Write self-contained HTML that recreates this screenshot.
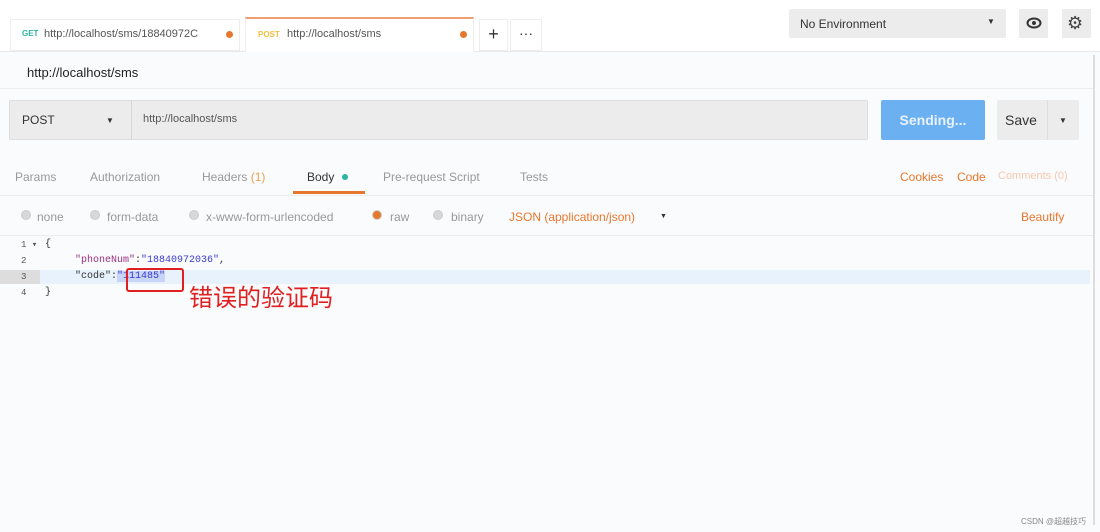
<!DOCTYPE html>
<html><head><meta charset="utf-8"><style>
*{margin:0;padding:0;box-sizing:border-box}
body{width:1100px;height:532px;background:#fafbfc;font-family:"Liberation Sans","Noto Sans CJK SC",sans-serif;position:relative;overflow:hidden;color:#333}
.a{position:absolute}
.t{font-size:12px;color:#555}
.g{color:#999;font-size:12px}
.dot{width:7px;height:7px;border-radius:50%;background:#e8772e}
.r{width:10px;height:10px;border-radius:50%;background:#d8d8d8;border:1px solid #ccc}
.m{font-family:'Liberation Mono',monospace;font-size:10px;white-space:pre}
</style></head><body>
<div class="a" style="left:0;top:0;width:1100px;height:52px;background:#fff;border-bottom:1px solid #e8e8e8"></div>
<div class="a" style="left:10px;top:19px;width:230px;height:32px;background:#fff;border:1px solid #eee"></div>
<div class="a" style="left:22px;top:29px;font-size:8px;font-weight:bold;color:#2bb5a0">GET</div>
<div class="a t" style="left:44px;top:28px;font-size:11px">http://localhost/sms/18840972C</div>
<div class="a dot" style="left:226px;top:31px"></div>
<div class="a" style="left:245px;top:17px;width:229px;height:35px;background:#fff;border-top:2px solid #f0a070;border-left:1px solid #eee;border-right:1px solid #eee"></div>
<div class="a" style="left:258px;top:30px;font-size:8px;font-weight:bold;color:#f5c040">POST</div>
<div class="a t" style="left:287px;top:28px;font-size:11px">http://localhost/sms</div>
<div class="a dot" style="left:460px;top:31px"></div>
<div class="a" style="left:479px;top:19px;width:29px;height:32px;background:#fff;border:1px solid #eee;text-align:center;font-size:18px;line-height:28px">+</div>
<div class="a" style="left:510px;top:19px;width:32px;height:32px;background:#fff;border:1px solid #eee;text-align:center;font-size:14px;line-height:26px">···</div>
<div class="a" style="left:789px;top:9px;width:217px;height:29px;background:#ececec;border-radius:2px"></div>
<div class="a t" style="left:800px;top:17px;font-size:12px;color:#333">No Environment</div>
<div class="a" style="left:987px;top:17px;font-size:8px">▼</div>
<div class="a" style="left:1019px;top:9px;width:29px;height:29px;background:#ececec"></div>
<svg class="a" style="left:1026px;top:17px" width="16" height="12"><ellipse cx="8" cy="6" rx="6.5" ry="4.5" fill="none" stroke="#333" stroke-width="2"/><circle cx="8" cy="6" r="2" fill="#333"/></svg>
<div class="a" style="left:1062px;top:9px;width:29px;height:29px;background:#ececec"></div>
<div class="a" style="left:1067px;top:11px;font-size:18px;line-height:24px;color:#444">⚙</div>
<div class="a" style="left:1093px;top:55px;width:2px;height:470px;background:#ddd"></div>
<div class="a" style="left:27px;top:65px;font-size:13px;color:#222">http://localhost/sms</div>
<div class="a" style="left:0;top:88px;width:1093px;height:1px;background:#ececec"></div>
<div class="a" style="left:9px;top:100px;width:859px;height:40px;background:#ececec;border:1px solid #ddd;border-radius:2px"></div>
<div class="a" style="left:131px;top:100px;width:1px;height:40px;background:#d8d8d8"></div>
<div class="a" style="left:22px;top:113px;font-size:12px;color:#333">POST</div>
<div class="a" style="left:106px;top:116px;font-size:8px">▼</div>
<div class="a t" style="left:143px;top:113px;font-size:11px">http://localhost/sms</div>
<div class="a" style="left:881px;top:100px;width:104px;height:40px;background:#6bb0f0;border-radius:2px;color:#e8f2ff;font-weight:bold;font-size:14px;text-align:center;line-height:40px">Sending...</div>
<div class="a" style="left:997px;top:100px;width:82px;height:40px;background:#ececec;border-radius:2px"></div>
<div class="a" style="left:1047px;top:100px;width:1px;height:40px;background:#ddd"></div>
<div class="a" style="left:1005px;top:112px;font-size:14px;color:#333">Save</div>
<div class="a" style="left:1059px;top:116px;font-size:8px">▼</div>
<div class="a g" style="left:15px;top:170px">Params</div>
<div class="a g" style="left:90px;top:170px">Authorization</div>
<div class="a g" style="left:202px;top:170px">Headers <span style="color:#e8a050">(1)</span></div>
<div class="a" style="left:307px;top:170px;font-size:12px;color:#333">Body</div>
<div class="a" style="left:342px;top:174px;width:6px;height:6px;border-radius:50%;background:#2bb5a0"></div>
<div class="a" style="left:293px;top:191px;width:72px;height:3px;background:#e8772e"></div>
<div class="a g" style="left:383px;top:170px">Pre-request Script</div>
<div class="a g" style="left:520px;top:170px">Tests</div>
<div class="a" style="left:900px;top:170px;font-size:12px;color:#e8772e">Cookies</div>
<div class="a" style="left:957px;top:170px;font-size:12px;color:#e8772e">Code</div>
<div class="a" style="left:998px;top:170px;font-size:11px;color:#f5c8b0">Comments (0)</div>
<div class="a" style="left:0;top:195px;width:1093px;height:1px;background:#ececec"></div>
<div class="a r" style="left:21px;top:210px"></div><div class="a g" style="left:37px;top:210px">none</div>
<div class="a r" style="left:90px;top:210px"></div><div class="a g" style="left:107px;top:210px">form-data</div>
<div class="a r" style="left:189px;top:210px"></div><div class="a g" style="left:206px;top:210px">x-www-form-urlencoded</div>
<div class="a r" style="left:372px;top:210px;background:#e8772e;border-color:#ccc"></div><div class="a g" style="left:390px;top:210px">raw</div>
<div class="a r" style="left:433px;top:210px"></div><div class="a g" style="left:451px;top:210px">binary</div>
<div class="a" style="left:509px;top:210px;font-size:12px;color:#e8772e">JSON (application/json)</div>
<div class="a" style="left:660px;top:213px;font-size:7px">▼</div>
<div class="a" style="left:1021px;top:210px;font-size:12px;color:#e8772e">Beautify</div>
<div class="a" style="left:0;top:235px;width:1093px;height:1px;background:#ececec"></div>
<div class="a" style="left:0;top:270px;width:40px;height:14px;background:#ddd"></div>
<div class="a" style="left:40px;top:270px;width:1050px;height:14px;background:#e8f2fc"></div>
<div class="a m" style="left:21px;top:240px;font-size:9px;color:#555">1 ▾</div>
<div class="a m" style="left:21px;top:256px;font-size:9px;color:#555">2</div>
<div class="a m" style="left:21px;top:272px;font-size:9px;color:#555">3</div>
<div class="a m" style="left:21px;top:288px;font-size:9px;color:#555">4</div>
<div class="a m" style="left:45px;top:239px">{</div>
<div class="a m" style="left:75px;top:255px"><span style="color:#a03080">"phoneNum"</span>:<span style="color:#3a3ad0">"18840972036"</span>,</div>
<div class="a m" style="left:75px;top:271px">"code":<span style="color:#3a3ad0;background:#c8d4f8">"111485"</span></div>
<div class="a m" style="left:45px;top:287px">}</div>
<div class="a" style="left:126px;top:268px;width:58px;height:24px;border:2px solid #e02020;border-radius:3px"></div>
<div class="a" style="left:189px;top:281px;font-size:24px;line-height:30px;color:#e02020;font-family:'Noto Sans CJK SC',sans-serif">错误的验证码</div>
<div class="a" style="left:1021px;top:516px;font-size:8px;color:#888">CSDN @超越技巧</div>
</body></html>
